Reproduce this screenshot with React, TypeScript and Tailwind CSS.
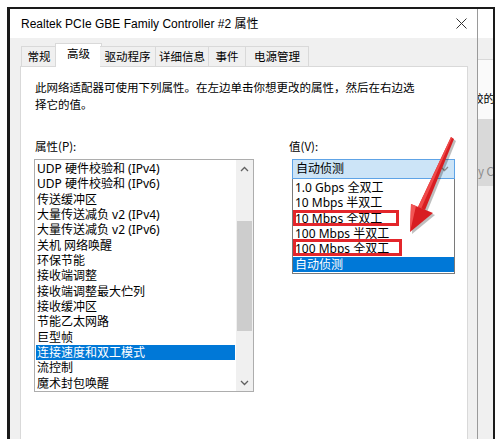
import React from 'react';

const props = [
  'UDP 硬件校验和 (IPv4)',
  'UDP 硬件校验和 (IPv6)',
  '传送缓冲区',
  '大量传送减负 v2 (IPv4)',
  '大量传送减负 v2 (IPv6)',
  '关机 网络唤醒',
  '环保节能',
  '接收端调整',
  '接收端调整最大伫列',
  '接收缓冲区',
  '节能乙太网路',
  '巨型帧',
  '连接速度和双工模式',
  '流控制',
  '魔术封包唤醒',
];

const speeds = ['1.0 Gbps 全双工', '10 Mbps 半双工', '10 Mbps 全双工', '100 Mbps 半双工', '100 Mbps 全双工', '自动侦测'];

const tabs = [
  { label: '常规', w: 'w-[36px]' },
  { label: '高级', w: 'w-[47px]', active: true },
  { label: '驱动程序', w: 'w-[56px]' },
  { label: '详细信息', w: 'w-[53px]' },
  { label: '事件', w: 'w-[37px]' },
  { label: '电源管理', w: 'w-[63px]' },
];

// Latin glyphs in the lists are wider than the CJK font's own
const listFont = { fontFamily: '"Noto Sans", "Noto Sans CJK SC", sans-serif' };

const Chevron: React.FC<{ up?: boolean; color?: string }> = ({ up, color = '#606060' }) => (
  <svg width="9" height="6" viewBox="0 0 9 6">
    <path d={up ? 'M1 5 L4.5 1.5 L8 5' : 'M1 1 L4.5 4.5 L8 1'} fill="none" stroke={color} strokeWidth="1.3" />
  </svg>
);

export default function App() {
  return (
    <div
      className="relative w-[500px] h-[439px] overflow-hidden bg-white pt-[7px] pl-[7px] text-[11.5px] text-black"
      style={{ fontFamily: '"Noto Sans CJK SC", "Noto Sans", sans-serif' }}
    >
      <div className="flex w-[488px] h-[440px] border-t-2 border-l-[3px] border-r-2 border-[#1a1a1a]">
        {/* dialog */}
        <div className="flex w-[468px] flex-col bg-[#f0f0f0] border-r border-[#9a9a9a]">
          {/* title bar */}
          <div className="flex h-[29px] items-center justify-between bg-white pl-[11px] pr-[10px]">
            <span
              className="text-[12px]"
              style={{ fontFamily: '"Liberation Sans", "Noto Sans CJK SC", sans-serif' }}
            >
              Realtek PCIe GBE Family Controller #2 属性
            </span>
            <svg width="11" height="11" viewBox="0 0 11 11">
              <path d="M0.5 0.5 L10.5 10.5 M10.5 0.5 L0.5 10.5" stroke="#333" strokeWidth="1" />
            </svg>
          </div>

          {/* tabs */}
          <div className="relative z-10 -mb-px ml-[11px] mt-[5px] flex h-[24px] items-end">
            {tabs.map((t) =>
              t.active ? (
                <div
                  key={t.label}
                  className={`${t.w} -mx-[2px] flex h-[24px] items-center justify-center border border-b-0 border-[#d9d9d9] bg-white pb-[3px]`}
                >
                  {t.label}
                </div>
              ) : (
                <div
                  key={t.label}
                  className={`${t.w} flex h-[21px] items-center justify-center border border-l-0 border-[#d9d9d9] first:border-l bg-[#f0f0f0]`}
                >
                  {t.label}
                </div>
              )
            )}
          </div>

          {/* panel */}
          <div className="ml-[10px] mr-[9px] flex-1 border border-[#d9d9d9] bg-white pl-[14px] pt-[12px]">
            <p className="leading-[17px]">
              此网络适配器可使用下列属性。在左边单击你想更改的属性，然后在右边选
              <br />
              择它的值。
            </p>

            <div className="mt-[25px] flex">
              {/* left column */}
              <div className="w-[219px]">
                <div className="leading-[17px]">属性(P):</div>
                <div className="-ml-px mt-[4px] flex h-[233px] w-[220px] border border-[#adadad]">
                  <div className="flex-1 overflow-hidden px-px pt-px text-[12px]" style={listFont}>
                    {props.map((p) => (
                      <div
                        key={p}
                        className={`h-[15.33px] pl-px leading-[15.33px] whitespace-nowrap ${
                          p === '连接速度和双工模式' ? 'bg-[#0078d7] text-white' : ''
                        }`}
                      >
                        {p}
                      </div>
                    ))}
                  </div>
                  <div className="flex w-[17px] flex-col bg-[#f0f0f0]">
                    <div className="flex h-[17px] items-center justify-center">
                      <Chevron up />
                    </div>
                    <div className="mx-px mt-[44px] h-[110px] bg-[#cdcdcd]" />
                    <div className="flex-1" />
                    <div className="flex h-[17px] items-center justify-center">
                      <Chevron />
                    </div>
                  </div>
                </div>
              </div>

              {/* right column */}
              <div className="ml-[35px] w-[166px]">
                <div className="leading-[17px]">值(V):</div>
                <div className="ml-[3px] mt-[4px] w-[163px] text-[12px]" style={listFont}>
                  <div className="flex h-[20px] items-center justify-between border border-[#5ea3e6] bg-[#cce4f7] pl-[3px] pr-[5px]">
                    <span>自动侦测</span>
                    <Chevron color="#8a8a8a" />
                  </div>
                  <div className="relative h-[95px] border border-t-0 border-[#7a7a7a] bg-white pt-px">
                    {speeds.map((s) => (
                      <div
                        key={s}
                        className={`h-[15.33px] px-[2px] leading-[15.33px] whitespace-nowrap ${
                          s === '自动侦测' ? 'bg-[#0078d7] text-white' : ''
                        }`}
                      >
                        {s}
                      </div>
                    ))}
                    <div className="absolute left-0 top-[31px] h-[16px] w-[106px] border-[3px] border-[#e3262b]" />
                    <div className="absolute left-0 top-[60px] h-[17px] w-[109px] border-[3px] border-[#e3262b]" />
                  </div>
                </div>
              </div>
            </div>
          </div>
        </div>

        {/* window behind */}
        <div className="flex flex-1 flex-col overflow-hidden bg-[#f0f0f0]">
          <div className="h-[29px] bg-white" />
          <div className="h-[22px] border-b border-[#d9d9d9]" />
          <div className="h-[59px] bg-[#fafafa] pt-[30px]">
            <span className="-ml-[6px] block whitespace-nowrap leading-[17px]">较的</span>
          </div>
          <div className="h-[67px] bg-[#d9d9d9] pt-[44px] text-[#8a8a8a]">
            <span className="block whitespace-nowrap leading-[17px]">y C</span>
          </div>
          <div className="flex-1 bg-[#f0f0f0]" />
        </div>
      </div>

      {/* red annotation arrow */}
      <svg className="pointer-events-none absolute left-0 top-0" width="500" height="439" viewBox="0 0 500 439">
        <g opacity="0.25" transform="translate(2 2)">
          <polygon points="451,137 454,139 425,210 418,207" fill="#000" />
          <polygon points="410,232 411,204 433,213" fill="#000" />
        </g>
        <polygon points="451,137 454,139 425,210 418,207" fill="#d81e22" />
        <polygon points="451,137 452,138 421,209 418,207" fill="#f04a4a" />
        <polygon points="410,232 411,204 433,213" fill="#d81e22" />
        <polygon points="410,232 411,204 416,206" fill="#f25555" />
      </svg>
    </div>
  );
}
